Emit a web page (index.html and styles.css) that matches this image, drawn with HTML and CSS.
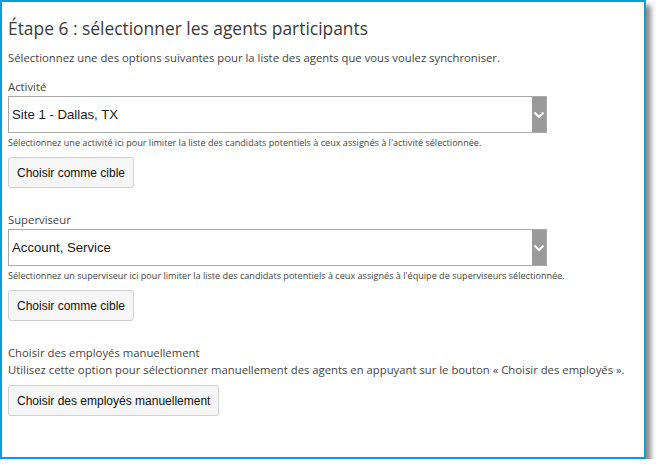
FILE: index.html
```html
<!DOCTYPE html>
<html lang="fr">
<head>
<meta charset="utf-8">
<title>Étape 6</title>
<link rel="stylesheet" href="styles.css">
</head>
<body>
<div class="panel">
  <h1 class="title">Étape 6 : sélectionner les agents participants</h1>
  <p class="intro">Sélectionnez une des options suivantes pour la liste des agents que vous voulez synchroniser.</p>

  <div class="field">
    <div class="label">Activité</div>
    <div class="select">
      <span class="select-value">Site 1 - Dallas, TX</span>
      <span class="select-arrow">
        <svg width="12" height="8" viewBox="0 0 12 8"><path d="M1.5 1.5 L6 6 L10.5 1.5" fill="none" stroke="#fff" stroke-width="2.2"/></svg>
      </span>
    </div>
    <div class="help">Sélectionnez une activité ici pour limiter la liste des candidats potentiels à ceux assignés à l'activité sélectionnée.</div>
    <button class="btn">Choisir comme cible</button>
  </div>

  <div class="field">
    <div class="label">Superviseur</div>
    <div class="select">
      <span class="select-value">Account, Service</span>
      <span class="select-arrow">
        <svg width="12" height="8" viewBox="0 0 12 8"><path d="M1.5 1.5 L6 6 L10.5 1.5" fill="none" stroke="#fff" stroke-width="2.2"/></svg>
      </span>
    </div>
    <div class="help">Sélectionnez un superviseur ici pour limiter la liste des candidats potentiels à ceux assignés à l'équipe de superviseurs sélectionnée.</div>
    <button class="btn">Choisir comme cible</button>
  </div>

  <div class="field manual">
    <div class="label">Choisir des employés manuellement</div>
    <div class="desc">Utilisez cette option pour sélectionner manuellement des agents en appuyant sur le bouton « Choisir des employés ».</div>
    <button class="btn">Choisir des employés manuellement</button>
  </div>
</div>
</body>
</html>
```

FILE: styles.css
```css
html, body {
  margin: 0;
  padding: 0;
  background: #fff;
}

.panel {
  box-sizing: border-box;
  width: 646px;
  height: 459px;
  border: 2px solid #0e9bd9;
  background: #fff;
  box-shadow: 5px 5px 5px rgba(0, 0, 0, 0.45);
  padding: 0 6px;
  font-family: "Open Sans", "Noto Sans", sans-serif;
  color: #444;
}

.title {
  margin: 0;
  padding-top: 13px;
  font-size: 17.4px;
  line-height: 26px;
  font-weight: 400;
  color: #3a3a3a;
}

.intro {
  margin: 9px 0 0;
  font-size: 11.3px;
  line-height: 16px;
}

.field {
  margin-top: 13px;
}

.label {
  font-size: 11.3px;
  line-height: 16px;
}

.select {
  display: flex;
  box-sizing: border-box;
  width: 539px;
  height: 37px;
  margin-top: 1px;
  border: 1px solid #a9a9a9;
  background: #fff;
}

.select-value {
  flex: 1;
  display: flex;
  align-items: center;
  padding-left: 3px;
  font-family: "Liberation Sans", Arial, sans-serif;
  font-size: 13.2px;
  color: #1a1a1a;
}

.select-arrow {
  width: 14px;
  background: #9a9a9a;
  display: flex;
  align-items: center;
  justify-content: center;
}

.help {
  margin-top: 3px;
  font-size: 9.1px;
  line-height: 14px;
}

.btn {
  display: block;
  margin: 7px 0 0;
  height: 31px;
  padding: 0 8px;
  border: 1px solid #cfcfcf;
  border-radius: 3px;
  background: #f6f6f6;
  font-family: "Liberation Sans", Arial, sans-serif;
  font-size: 12px;
  color: #111;
}

.field + .field {
  margin-top: 24px;
}

.manual {
  margin-top: 22px;
}

.desc {
  font-size: 11.3px;
  line-height: 17px;
}

.manual .btn {
  margin-top: 7px;
}
```
